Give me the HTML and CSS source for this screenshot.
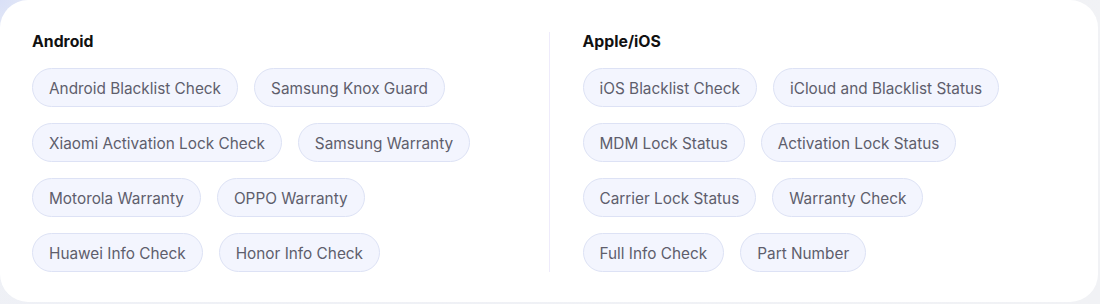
FILE: index.html
```html
<!DOCTYPE html>
<html lang="en">
<head>
    <meta charset="UTF-8">
    <meta name="viewport" content="width=device-width, initial-scale=1.0">
    <title>Check Services</title>
    <link rel="stylesheet" href="styles.css">
</head>
<body>

    <div class="card">
        <!-- Android services -->
        <div class="column">
            <h2>Android</h2>
            <div class="tags">
                <span class="tag">Android Blacklist Check</span>
                <span class="tag">Samsung Knox Guard</span>
                <span class="tag">Xiaomi Activation Lock Check</span>
                <span class="tag">Samsung Warranty</span>
                <span class="tag">Motorola Warranty</span>
                <span class="tag">OPPO Warranty</span>
                <span class="tag">Huawei Info Check</span>
                <span class="tag">Honor Info Check</span>
            </div>
        </div>

        <div class="divider"></div>

        <!-- Apple services -->
        <div class="column">
            <h2>Apple/iOS</h2>
            <div class="tags">
                <span class="tag">iOS Blacklist Check</span>
                <span class="tag">iCloud and Blacklist Status</span>
                <span class="tag">MDM Lock Status</span>
                <span class="tag">Activation Lock Status</span>
                <span class="tag">Carrier Lock Status</span>
                <span class="tag">Warranty Check</span>
                <span class="tag">Full Info Check</span>
                <span class="tag">Part Number</span>
            </div>
        </div>
    </div>

</body>
</html>
```

FILE: styles.css
```css
body {
    margin: 0;
    font-family: Inter, "Noto Sans", sans-serif;
    background: radial-gradient(circle at 0 0, #d9e0f7 0, #eef0f6 60px, #f1f2f5 100%);
    height: 304px;
}
.card {
    background-color: #fff;
    border-radius: 28px;
    margin: 0 2px 0 0;
    height: 302px;
    box-sizing: border-box;
    padding: 32px 32px 30px;
    display: grid;
    grid-template-columns: 1fr 1px 1fr;
    column-gap: 33px;
}
.divider {
    background-color: #eeebfb;
}
h2 {
    margin: 0 0 16px;
    font-size: 15.8px;
    line-height: 20px;
    font-weight: 700;
    color: #111;
}
.tags {
    display: flex;
    flex-wrap: wrap;
    gap: 16px;
}
.tag {
    display: inline-block;
    height: 39px;
    line-height: 39px;
    box-sizing: border-box;
    padding: 0 16px;
    font-size: 15.35px;
    color: #5e5e6c;
    background-color: #f3f5fe;
    border: 1px solid #dde2f5;
    border-radius: 20px;
    white-space: nowrap;
}
```
